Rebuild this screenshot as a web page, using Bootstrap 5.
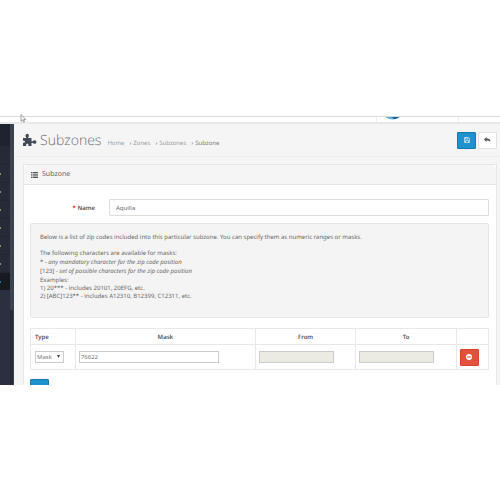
<!DOCTYPE html>
<html lang="en">
<head>
<meta charset="utf-8">
<meta name="viewport" content="width=device-width, initial-scale=1">
<title>Subzones</title>
<link href="https://cdn.jsdelivr.net/npm/bootstrap@5.3.0/dist/css/bootstrap.min.css" rel="stylesheet">
<style>
body{font-family:"Noto Sans","Open Sans",sans-serif;font-size:6px;line-height:8px;color:#666;background:#fff;padding-top:116px;text-rendering:geometricPrecision}
.topbar{height:8px;border-top:1px solid #dcdcdc;border-bottom:2px solid #e8e8e8;overflow:hidden}
.topbar .brand-cell{width:83px;margin-right:41px;border-left:1px solid #eee;border-right:1px solid #eee;padding-left:8px}
.topbar svg{display:block}
.pointer{position:absolute;left:20px;top:114px;z-index:2}
.sidebar{width:14px;background:#2a303f}
.rail{width:4px;background:#252c38;border-right:1px solid #3b4350}
.thumb{height:186px;background:#3b4350}
.sidebar a{display:flex;align-items:center;height:18px;border-top:1px solid #1f2831;background:#242d37}
.sidebar a::before{content:"";width:1px;height:2px;background:#8a8f70}
.sidebar .current{background:#16191f}
.sidebar .current::before{background:#1e7f8f}
.side-head{height:22px;background:#1d2430}
.side-gap{height:18px;background:#232b36}
.page{background:#f5f5f5}
.page-head{height:33px;padding:0 3px 0 9px;border-bottom:1px solid #eee}
h1{font-size:14px;line-height:20px;margin:1px 6px 0 3px;color:#6b6d78;font-family:"Open Sans",sans-serif;font-weight:300}
.breadcrumb{font-size:6px;--bs-breadcrumb-divider:"›";--bs-breadcrumb-item-padding-x:2px;padding-top:2px}
.breadcrumb-item+.breadcrumb-item{padding-left:5px}
.breadcrumb a{color:#999;text-decoration:none}
.breadcrumb .home{color:#8fa3b5}
.breadcrumb .active{color:#777}
.tool{width:19px;height:17px;padding:0;border-radius:1px;display:flex;align-items:center;justify-content:center}
.tool-blue{background:#1e91cf;border-color:#1978ab}
.tool-plain{background:#fff;border-color:#e2e2e2;margin-left:2px}
.tool-red{background:#e3503e;border-color:#d9402e}
.panel{margin:7px 3px 0 9px;border:1px solid #e6e6e6;border-bottom:0;border-radius:1px 1px 0 0}
.panel .card-header{height:20px;padding:0 7px;background:#f5f5f5;border-color:#e6e6e6;font-size:7px}
.panel .card-body{padding:14px 7px 0 6px}
.name-label{width:79px;padding-right:14px;flex-shrink:0;font-weight:600;color:#555}
.name-label span{color:#f00}
.name-box{height:17px;min-height:0;padding:0 6px;font-size:6px;border:1px solid #ddd;border-radius:1px;color:#666}
.note{margin-top:7px;padding:9px 9px 17px;background:#f4f4f4;border:1px solid #e6e6e6;border-radius:2px}
.note p{line-height:9px;margin:0 0 7px}
.note .examples{line-height:8px;margin:0}
.note .masks{margin:0}
.codes{margin:10px 0 9px;border-color:#e8e8e8;color:#666;table-layout:fixed}
.codes th{height:16px;padding:0 4px;text-align:center;vertical-align:middle;font-weight:600;color:#555}
.codes td{height:25px;padding:0 3px;vertical-align:middle}
.codes input,.codes select{display:block;height:12px;padding:0 1px;border:1px solid #ccc;font-size:6px;color:#777;border-radius:0;background:#fff}
.codes select{width:29px;padding-left:1px;appearance:none}
.select-wrap{position:relative;width:29px;margin-left:1px}
.select-wrap svg{position:absolute;right:4px;top:4px;pointer-events:none}
.codes input:disabled{background:#ebebe4}
.cut{height:6px;overflow:hidden}
</style>
<script src="https://cdn.jsdelivr.net/npm/bootstrap@5.3.0/dist/js/bootstrap.bundle.min.js"></script>
</head>
<body>
<svg class="pointer" width="7" height="9" viewBox="0 0 7 9"><path d="M1 .5v6.8l1.6-1.4 1 2.2 1-.5-1-2.1h2z" fill="#fff" stroke="#777" stroke-width=".7"/></svg>
<header class="topbar d-flex justify-content-end">
<div class="brand-cell"><svg width="15" height="3" viewBox="0 0 15 3"><path d="M0 0h15q-7 5-15 0" fill="#65abd8"/><path d="M7 0h7q-2 2-5 2z" fill="#17599a"/></svg></div>
</header>
<div class="d-flex">
<nav class="sidebar d-flex flex-shrink-0" aria-label="Main">
<div class="flex-grow-1">
<div class="side-head"></div><div class="side-gap"></div>
<a href="#" aria-label="Catalog"></a><a href="#" aria-label="Extensions"></a><a href="#" aria-label="Design"></a><a href="#" aria-label="Sales"></a><a href="#" aria-label="Customers"></a><a href="#" aria-label="Marketing"></a><a href="#" class="current" aria-label="System"></a>
</div>
<div class="rail"><div class="thumb"></div></div>
</nav>
<main class="page flex-grow-1">
<div class="page-head d-flex align-items-center">
<svg width="14" height="14" viewBox="0 0 14 14" fill="#444957"><path d="M0 5h3.400Q2.400 3.700 2.500 2.300 2.700.7 4.200.7T5.900 2.300Q6 3.700 5 5h3.500v3.300q1 .2 1.700-.6 1.300-1 2.800 0 1 1.300 0 2.600-1.500 1-2.800 0Q9.500 9.600 8.500 9.900V13H5.400q.5-2.600-1.100-2.600T3.200 13H0V9.800q2 .2 2-1.100T0 7.700z"/></svg>
<h1>Subzones</h1>
<nav aria-label="breadcrumb"><ol class="breadcrumb mb-0 mt-1">
<li class="breadcrumb-item"><a class="home" href="#">Home</a></li><li class="breadcrumb-item"><a href="#">Zones</a></li><li class="breadcrumb-item"><a href="#">Subzones</a></li><li class="breadcrumb-item active" aria-current="page">Subzone</li></ol></nav>
<div class="d-flex ms-auto"><button class="btn tool tool-blue" aria-label="Save"><svg width="6" height="6" viewBox="0 0 12 12" fill="none" stroke="#d5eaf6" stroke-width="1.500"><path d="M1 1h8l2 2v8H1zM3 1v3h5V1M3 11V7h6v4"/></svg></button><button class="btn tool tool-plain" aria-label="Back"><svg width="7" height="6" viewBox="0 0 14 12" fill="#555"><path d="M5 0v3c6 0 9 2 7 8 0-3-2-4-7-4v3L0 5z"/></svg></button></div>
</div>
<section class="card panel">
<div class="card-header d-flex align-items-center"><svg class="me-1" width="7" height="6" viewBox="0 0 7 6" stroke="#555"><path d="M0 .5h1m.5 0H7M0 2.200h1m.5 0H7M0 3.900h1m.5 0H7M0 5.500h1m.5 0H7"/></svg>Subzone</div>
<div class="card-body">
<div class="d-flex align-items-center"><label class="name-label text-end" for="name"><span>*</span> Name</label><input id="name" class="form-control name-box" value="Aquilla"></div>
<div class="note">
<p>Below is a list of zip codes included into this particular subzone. You can specify them as numeric ranges or masks.</p>
<p class="masks">The following characters are available for masks:<br>* - <i>any mandatory character for the zip code position</i><br>[123] - <i>set of possible characters for the zip code position</i></p>
<p class="examples">Examples:<br>1) 20*** - includes 20101, 20EFG, etc.<br>2) [ABC]123** - includes A12310, B12399, C12311, etc.</p>
</div>
<table class="table table-bordered codes">
<colgroup><col style="width:9.800%"><col style="width:39.300%"><col style="width:21.900%"><col style="width:22%"><col style="width:7%"></colgroup>
<thead><tr><th class="text-start">Type</th><th>Mask</th><th>From</th><th>To</th><th></th></tr></thead>
<tbody><tr><td><div class="select-wrap"><select aria-label="Type"><option>Mask</option></select><svg width="3" height="3" viewBox="0 0 3 3"><path d="M0 0h3L1.500 3z" fill="#444"/></svg></div></td><td><input style="width:81%" aria-label="Mask" value="76622"></td><td><input style="width:80%" aria-label="From" disabled></td><td><input style="width:80%" aria-label="To" disabled></td><td><button class="btn tool tool-red" aria-label="Remove"><svg width="6" height="6" viewBox="0 0 6 6"><circle cx="3" cy="3" r="3" fill="#fff"/><path d="M1 3h4" stroke="#e3503e"/></svg></button></td></tr></tbody>
</table>
<div class="cut"><button class="btn tool tool-blue" aria-label="Add"><svg width="6" height="6" viewBox="0 0 6 6"><circle cx="3" cy="3" r="3" fill="#fff"/><path d="M1 3h4M3 1v4" stroke="#1e91cf"/></svg></button></div>
</div>
</section>
</main>
</div>
</body>
</html>
